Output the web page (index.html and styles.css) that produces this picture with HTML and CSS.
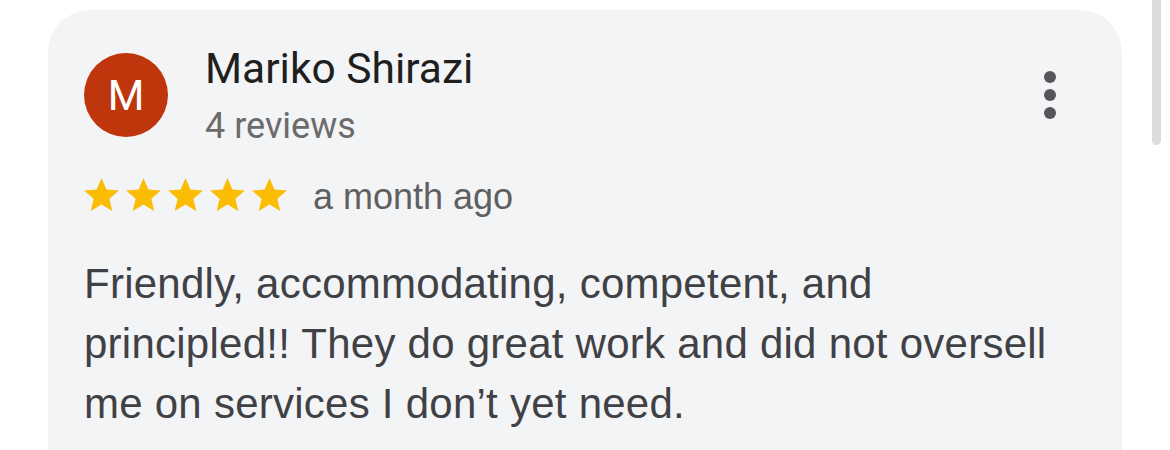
FILE: index.html
```html
<!DOCTYPE html>
<html lang="en">
<head>
<meta charset="utf-8">
<title>Review</title>
<link rel="stylesheet" href="styles.css">
</head>
<body>
<div class="page">
  <article class="card">
    <header class="head">
      <div class="avatar">M</div>
      <div class="who">
        <div class="name">Mariko Shirazi</div>
        <div class="count">4 reviews</div>
      </div>
      <button class="more" aria-label="More options">
        <span class="dot"></span><span class="dot"></span><span class="dot"></span>
      </button>
    </header>
    <div class="meta">
      <div class="stars">
        <svg class="star" viewBox="2 2 20 19" width="35" height="33"><path d="M12 17.27L18.18 21l-1.64-7.03L22 9.24l-7.19-.61L12 2 9.19 8.63 2 9.24l5.46 4.73L5.82 21z"/></svg>
        <svg class="star" viewBox="2 2 20 19" width="35" height="33"><path d="M12 17.27L18.18 21l-1.64-7.03L22 9.24l-7.19-.61L12 2 9.19 8.63 2 9.24l5.46 4.73L5.82 21z"/></svg>
        <svg class="star" viewBox="2 2 20 19" width="35" height="33"><path d="M12 17.27L18.18 21l-1.64-7.03L22 9.24l-7.19-.61L12 2 9.19 8.63 2 9.24l5.46 4.73L5.82 21z"/></svg>
        <svg class="star" viewBox="2 2 20 19" width="35" height="33"><path d="M12 17.27L18.18 21l-1.64-7.03L22 9.24l-7.19-.61L12 2 9.19 8.63 2 9.24l5.46 4.73L5.82 21z"/></svg>
        <svg class="star" viewBox="2 2 20 19" width="35" height="33"><path d="M12 17.27L18.18 21l-1.64-7.03L22 9.24l-7.19-.61L12 2 9.19 8.63 2 9.24l5.46 4.73L5.82 21z"/></svg>
      </div>
      <span class="when">a month ago</span>
    </div>
    <p class="text">Friendly, accommodating, competent, and<br>principled!! They do great work and did not oversell<br>me on services I don’t yet need.</p>
  </article>
  <div class="scrollbar"></div>
</div>
</body>
</html>
```

FILE: styles.css
```css
html, body {
  margin: 0;
  padding: 0;
  background: #ffffff;
  overflow: hidden;
  height: 450px;
}

.page {
  position: relative;
  padding: 10px 0 0 48px;
}

.card {
  width: 1074px;
  box-sizing: border-box;
  background: #f3f4f6;
  border-radius: 42px 42px 0 0;
  padding: 34px 36px 20px 36px;
}

.head {
  display: flex;
  align-items: flex-start;
}

.avatar {
  width: 84px;
  height: 84px;
  margin-top: 9px;
  border-radius: 50%;
  background: #bf360c;
  color: #ffffff;
  font-family: Roboto, "Liberation Sans", sans-serif;
  font-size: 42px;
  display: flex;
  align-items: center;
  justify-content: center;
  flex: none;
}

.who {
  margin-left: 37px;
  flex: 1;
}

.name {
  font-family: Roboto, "Liberation Sans", sans-serif;
  font-size: 42.5px;
  line-height: 50px;
  color: #1f1f1f;
}

.count {
  margin-top: 10px;
  font-family: Roboto, "Liberation Sans", sans-serif;
  font-size: 36px;
  line-height: 44px;
  color: #6b6b6b;
}

.more {
  width: 48px;
  height: 48px;
  margin: 27px 12px 0 0;
  padding: 0;
  border: 0;
  background: transparent;
  display: flex;
  flex-direction: column;
  align-items: center;
  justify-content: center;
  gap: 6px;
}

.dot {
  width: 12px;
  height: 12px;
  border-radius: 50%;
  background: #555659;
}

.meta {
  display: flex;
  align-items: flex-start;
  margin-top: 26px;
}

.stars {
  display: flex;
  gap: 7px;
  padding-top: 4px;
}

.star {
  display: block;
  fill: #fbbc04;
}

.when {
  margin-left: 26px;
  padding-top: 2px;
  font-family: "Liberation Sans", Arial, sans-serif;
  font-size: 36px;
  line-height: 42px;
  color: #5f5f5f;
}

.text {
  margin: 36px 0 0 0;
  font-family: "Liberation Sans", Arial, sans-serif;
  font-size: 42px;
  line-height: 60px;
  letter-spacing: 0.25px;
  white-space: nowrap;
  color: #404144;
}

.scrollbar {
  position: absolute;
  top: 0;
  left: 1152px;
  width: 9px;
  height: 145px;
  border-radius: 0 0 5px 5px;
  background: #dcdcdc;
}
```
